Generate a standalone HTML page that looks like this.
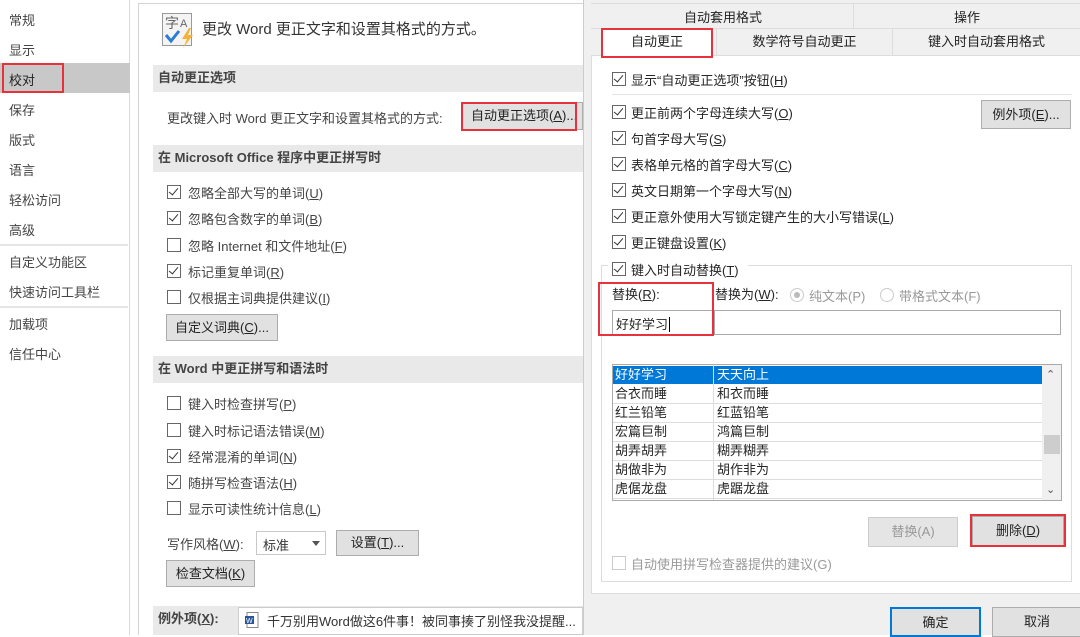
<!DOCTYPE html>
<html><head><meta charset="utf-8">
<style>
*{margin:0;padding:0;box-sizing:border-box}
body{width:1080px;height:635px;overflow:hidden;background:#fff;font-family:"Liberation Sans","Noto Sans CJK SC",sans-serif;font-size:13px;color:#262626;position:relative}
.a{position:absolute;white-space:nowrap}
.nav{left:9px;color:#444;font-size:13px}
.cb{position:absolute;width:14px;height:14px;border:1px solid #666;background:#fff}
.cb.c::after{content:"";position:absolute;left:3px;top:0px;width:4px;height:8px;border:solid #333;border-width:0 1.5px 1.5px 0;transform:rotate(40deg)}
.bar{position:absolute;background:#e9e9e9;font-weight:bold;color:#444;padding-left:5px}
.btn{position:absolute;background:#e1e1e1;border:1px solid #adadad;text-align:center;color:#222}
.red{position:absolute;border:2px solid #e5323b}
.lt{color:#444}
</style></head><body>
<!-- left nav -->
<div class="a" style="left:0;top:0;width:130px;height:635px;background:#fff;border-right:1px solid #d9d9d9"></div>
<div class="a" style="left:0;top:63px;width:130px;height:30px;background:#c8c8c8"></div>
<div class="red" style="left:2px;top:63px;width:62px;height:30px"></div>
<div class="a nav" style="top:10px">常规</div>
<div class="a nav" style="top:40px">显示</div>
<div class="a nav" style="top:70px;color:#222">校对</div>
<div class="a nav" style="top:100px">保存</div>
<div class="a nav" style="top:130px">版式</div>
<div class="a nav" style="top:160px">语言</div>
<div class="a nav" style="top:190px">轻松访问</div>
<div class="a nav" style="top:220px">高级</div>
<div class="a" style="left:0;top:244px;width:128px;height:2px;background:#e6e6e6"></div>
<div class="a nav" style="top:252px">自定义功能区</div>
<div class="a nav" style="top:282px">快速访问工具栏</div>
<div class="a" style="left:0;top:306px;width:128px;height:2px;background:#e6e6e6"></div>
<div class="a nav" style="top:314px">加载项</div>
<div class="a nav" style="top:344px">信任中心</div>
<div class="a" style="left:138px;top:3px;width:1px;height:632px;background:#d4d4d4"></div>
<div class="a" style="left:138px;top:3px;width:450px;height:1px;background:#d4d4d4"></div>
<!-- main -->
<svg class="a" style="left:162px;top:13px" width="34" height="36" viewBox="0 0 34 36"><rect x="0.5" y="0.5" width="29" height="32" fill="#f4f4f4" stroke="#999"/><text x="3" y="15" font-size="14" fill="#666" font-family="Noto Sans CJK SC">字</text><text x="18" y="14" font-size="11" fill="#666" font-family="Liberation Sans">A</text><path d="M4 22 L9 28 L17 18" stroke="#2b7cd3" stroke-width="3" fill="none"/><path d="M27 15 L20 26 L25 26 L21 35 L31 22 L26 22 L29 15Z" fill="#f5b335"/></svg>
<div class="a" style="left:202px;top:18px;font-size:15px;color:#333">更改 Word 更正文字和设置其格式的方式。</div>
<div class="bar" style="left:153px;top:65px;width:430px;height:27px;line-height:26px">自动更正选项</div>
<div class="a lt" style="left:167px;top:108px">更改键入时 Word 更正文字和设置其格式的方式:</div>
<div class="btn" style="left:462px;top:102px;width:121px;height:28px;line-height:26px;text-align:left;padding-left:8px">自动更正选项(<u>A</u>)...</div>
<div class="red" style="left:461px;top:102px;width:116px;height:29px"></div>
<div class="bar" style="left:153px;top:145px;width:430px;height:27px;line-height:26px">在 Microsoft Office 程序中更正拼写时</div>
<div class="cb c" style="left:167px;top:185px"></div><div class="a lt" style="left:188px;top:183px">忽略全部大写的单词(<u>U</u>)</div>
<div class="cb c" style="left:167px;top:211px"></div><div class="a lt" style="left:188px;top:209px">忽略包含数字的单词(<u>B</u>)</div>
<div class="cb" style="left:167px;top:238px"></div><div class="a lt" style="left:188px;top:236px">忽略 Internet 和文件地址(<u>F</u>)</div>
<div class="cb c" style="left:167px;top:264px"></div><div class="a lt" style="left:188px;top:262px">标记重复单词(<u>R</u>)</div>
<div class="cb" style="left:167px;top:290px"></div><div class="a lt" style="left:188px;top:288px">仅根据主词典提供建议(<u>I</u>)</div>
<div class="btn" style="left:166px;top:314px;width:112px;height:27px;line-height:25px">自定义词典(<u>C</u>)...</div>
<div class="bar" style="left:153px;top:356px;width:430px;height:27px;line-height:26px">在 Word 中更正拼写和语法时</div>
<div class="cb" style="left:167px;top:396px"></div><div class="a lt" style="left:188px;top:394px">键入时检查拼写(<u>P</u>)</div>
<div class="cb" style="left:167px;top:423px"></div><div class="a lt" style="left:188px;top:421px">键入时标记语法错误(<u>M</u>)</div>
<div class="cb c" style="left:167px;top:449px"></div><div class="a lt" style="left:188px;top:447px">经常混淆的单词(<u>N</u>)</div>
<div class="cb c" style="left:167px;top:475px"></div><div class="a lt" style="left:188px;top:473px">随拼写检查语法(<u>H</u>)</div>
<div class="cb" style="left:167px;top:501px"></div><div class="a lt" style="left:188px;top:499px">显示可读性统计信息(<u>L</u>)</div>
<div class="a lt" style="left:167px;top:534px">写作风格(<u>W</u>):</div>
<div class="a" style="left:256px;top:531px;width:70px;height:24px;border:1px solid #c8c8c8;padding:3px 6px;color:#333">标准<span style="position:absolute;right:5px;top:9px;border:4px solid transparent;border-top:5px solid #555"></span></div>
<div class="btn" style="left:336px;top:530px;width:83px;height:26px;line-height:24px">设置(<u>T</u>)...</div>
<div class="btn" style="left:166px;top:560px;width:89px;height:27px;line-height:25px">检查文档(<u>K</u>)</div>
<div class="bar" style="left:153px;top:606px;width:430px;height:29px;line-height:26px">例外项(<u>X</u>):</div>
<div class="a" style="left:238px;top:607px;width:345px;height:28px;background:#fff;border:1px solid #ccc;padding:3px 0 0 28px;color:#333">千万别用Word做这6件事！被同事揍了别怪我没提醒...</div>
<svg class="a" style="left:245px;top:612px" width="14" height="16"><rect x="2" y="0.5" width="11" height="15" fill="#fff" stroke="#888"/><rect x="0" y="4" width="9" height="8" fill="#2b579a"/><text x="1" y="11" font-size="7" fill="#fff">W</text></svg>
<!-- dialog -->
<div class="a" style="left:583px;top:0;width:497px;height:635px;background:#f0f0f0;border-left:1px solid #ccc"></div>
<div class="a" style="left:591px;top:3px;width:489px;height:25px;background:#f0f0f0;border-top:1px solid #ddd"></div>
<div class="a" style="left:853px;top:3px;width:1px;height:25px;background:#ddd"></div>
<div class="a" style="left:684px;top:7px;color:#222">自动套用格式</div>
<div class="a" style="left:954px;top:7px;color:#222">操作</div>
<div class="a" style="left:591px;top:28px;width:489px;height:1px;background:#ddd"></div>
<div class="a" style="left:716px;top:29px;width:177px;height:26px;background:#f0f0f0;border-left:1px solid #ddd;border-right:1px solid #ddd;text-align:center;line-height:26px;color:#222">数学符号自动更正</div>
<div class="a" style="left:893px;top:29px;width:187px;height:26px;background:#f0f0f0;text-align:center;line-height:26px;color:#222">键入时自动套用格式</div>
<div class="a" style="left:591px;top:55px;width:489px;height:539px;background:#fff;border:1px solid #ddd;border-right:none"></div>
<div class="a" style="left:602px;top:29px;width:110px;height:28px;background:#fff;text-align:center;line-height:26px;color:#222">自动更正</div>
<div class="red" style="left:601px;top:28px;width:112px;height:30px"></div>
<div class="cb c" style="left:612px;top:72px"></div><div class="a" style="left:631px;top:70px">显示“自动更正选项”按钮(<u>H</u>)</div>
<div class="a" style="left:612px;top:94px;width:460px;height:1px;background:#e3e3e3"></div>
<div class="cb c" style="left:612px;top:105px"></div><div class="a" style="left:631px;top:103px">更正前两个字母连续大写(<u>O</u>)</div>
<div class="btn" style="left:981px;top:100px;width:90px;height:29px;line-height:27px">例外项(<u>E</u>)...</div>
<div class="cb c" style="left:612px;top:131px"></div><div class="a" style="left:631px;top:129px">句首字母大写(<u>S</u>)</div>
<div class="cb c" style="left:612px;top:157px"></div><div class="a" style="left:631px;top:155px">表格单元格的首字母大写(<u>C</u>)</div>
<div class="cb c" style="left:612px;top:183px"></div><div class="a" style="left:631px;top:181px">英文日期第一个字母大写(<u>N</u>)</div>
<div class="cb c" style="left:612px;top:209px"></div><div class="a" style="left:631px;top:207px">更正意外使用大写锁定键产生的大小写错误(<u>L</u>)</div>
<div class="cb c" style="left:612px;top:235px"></div><div class="a" style="left:631px;top:233px">更正键盘设置(<u>K</u>)</div>
<div class="a" style="left:601px;top:265px;width:471px;height:317px;border:1px solid #dcdcdc"></div>
<div class="a" style="left:608px;top:258px;width:140px;height:18px;background:#fff"></div>
<div class="cb c" style="left:612px;top:262px"></div><div class="a" style="left:631px;top:260px">键入时自动替换(<u>T</u>)</div>
<div class="a" style="left:612px;top:284px">替换(<u>R</u>):</div>
<div class="a" style="left:715px;top:284px">替换为(<u>W</u>):</div>
<div class="a" style="left:790px;top:288px;width:14px;height:14px;border:1px solid #ccc;border-radius:50%"><div style="margin:3px;width:6px;height:6px;border-radius:50%;background:#bbb"></div></div>
<div class="a" style="left:809px;top:286px;color:#999">纯文本(P)</div>
<div class="a" style="left:880px;top:288px;width:14px;height:14px;border:1px solid #ccc;border-radius:50%"></div>
<div class="a" style="left:899px;top:286px;color:#999">带格式文本(F)</div>
<div class="a" style="left:612px;top:310px;width:102px;height:25px;border:1px solid #aaa;padding:3px 0 0 3px">好好学习<span style="border-left:1px solid #000;margin-left:1px"></span></div>
<div class="a" style="left:714px;top:310px;width:347px;height:25px;border:1px solid #aaa"></div>
<div class="red" style="left:598px;top:282px;width:116px;height:54px"></div>
<div class="a" style="left:612px;top:364px;width:450px;height:137px;border:1px solid #aaa;background:#fff;overflow:hidden">
<div style="position:absolute;left:0;top:1px;width:429px;height:18px;background:#0078d7"></div>
<div style="position:absolute;left:100px;top:0;width:1px;height:137px;background:#ddd"></div>
<div style="position:absolute;left:0;top:19px;width:429px;line-height:19px;">
</div>
<div style="position:absolute;left:2px;top:0;line-height:19px">
<div style="color:#fff">好好学习</div><div>合衣而睡</div><div>红兰铅笔</div><div>宏篇巨制</div><div>胡弄胡弄</div><div>胡做非为</div><div>虎倨龙盘</div></div>
<div style="position:absolute;left:104px;top:0;line-height:19px">
<div style="color:#fff">天天向上</div><div>和衣而睡</div><div>红蓝铅笔</div><div>鸿篇巨制</div><div>糊弄糊弄</div><div>胡作非为</div><div>虎踞龙盘</div></div>
<div style="position:absolute;left:0;top:38px;width:429px;height:1px;background:#ddd"></div>
<div style="position:absolute;left:0;top:57px;width:429px;height:1px;background:#ddd"></div>
<div style="position:absolute;left:0;top:76px;width:429px;height:1px;background:#ddd"></div>
<div style="position:absolute;left:0;top:95px;width:429px;height:1px;background:#ddd"></div>
<div style="position:absolute;left:0;top:114px;width:429px;height:1px;background:#ddd"></div>
<div style="position:absolute;left:0;top:133px;width:429px;height:1px;background:#ddd"></div>
<div style="position:absolute;left:429px;top:0;width:20px;height:137px;background:#f0f0f0"></div>
<div style="position:absolute;left:431px;top:70px;width:16px;height:19px;background:#cdcdcd"></div>
<div style="position:absolute;left:433px;top:3px;font-size:11px;color:#555">&#8963;</div>
<div style="position:absolute;left:433px;top:118px;font-size:11px;color:#555">&#8964;</div>
</div>
<div class="btn" style="left:868px;top:517px;width:90px;height:30px;line-height:28px;color:#999;background:#e5e5e5;border-color:#ccc">替换(A)</div>
<div class="btn" style="left:972px;top:516px;width:92px;height:30px;line-height:28px">删除(<u>D</u>)</div>
<div class="red" style="left:970px;top:514px;width:96px;height:33px"></div>
<div class="cb" style="left:612px;top:556px;border-color:#ccc"></div><div class="a" style="left:631px;top:554px;color:#999">自动使用拼写检查器提供的建议(G)</div>
<div class="btn" style="left:890px;top:607px;width:91px;height:30px;line-height:28px;border:2px solid #0078d7">确定</div>
<div class="btn" style="left:992px;top:607px;width:90px;height:30px;line-height:28px">取消</div>
</body></html>
